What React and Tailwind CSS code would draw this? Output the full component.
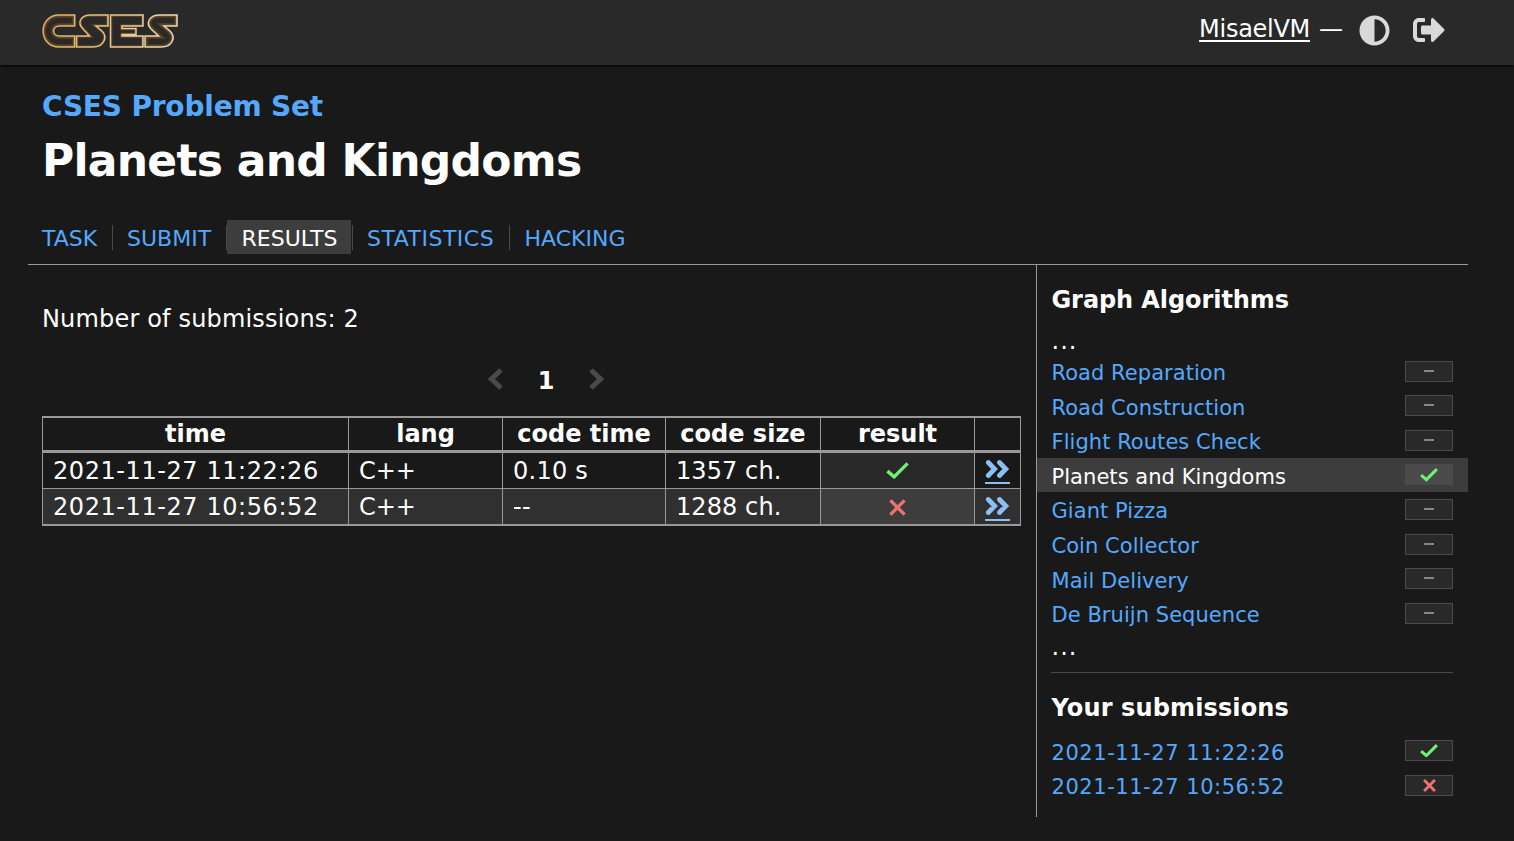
import { FaAdjust, FaSignOutAlt } from "react-icons/fa";

const LOGO_SHAPES = [
  "M74.700 15V26H60C51.500 26 51.500 36 60 36H74.700V47H59C37.800 47 37.800 15 59 15Z",
  "M108 15V26H96L102 31C108 37 104 47 93 47H76.500V36H89.500L83 29C77 23 80 15 91 15Z",
  "M110.500 15H143V26H122V28.500H136V34.500H122V36H143V47H110.500Z",
  "M177 15V26H164L170 31C176 37 173 47 161 47H145V36H158.500L151 29C145.500 23 149 15 160 15Z",
];

function Logo() {
  return (
    <svg width="140" height="40" viewBox="40 11 140 40" fill="none">
      <defs>
        <linearGradient id="gold" gradientUnits="userSpaceOnUse" x1="42" y1="0" x2="178" y2="0">
          <stop offset="0" stopColor="#d9ad66" />
          <stop offset="0.6" stopColor="#e6cb92" />
          <stop offset="1" stopColor="#ead9c4" />
        </linearGradient>
        <clipPath id="letters">
          {LOGO_SHAPES.map((d) => <path key={d} d={d} />)}
        </clipPath>
      </defs>
      <g clipPath="url(#letters)" stroke="#8a5a20">
        <path d={LOGO_SHAPES[0]} strokeWidth="6" opacity=".35" />
        <path d={LOGO_SHAPES[3]} strokeWidth="6" opacity=".35" />
        {LOGO_SHAPES.map((d) => <path key={d} d={d} strokeWidth="3.600" opacity=".55" />)}
      </g>
      {LOGO_SHAPES.map((d) => <path key={d} d={d} stroke="url(#gold)" strokeWidth="1.500" />)}
    </svg>
  );
}

const Check = ({ w }) => (
  <svg width={w} height={(w * 18) / 24} viewBox="0 0 24 18" fill="none" stroke="#71f076" strokeWidth={w > 20 ? 3.5 : 4}>
    <path d="M1.500 9.500L8.500 15.500L22.500 1.500" />
  </svg>
);
const Cross = ({ w }) => (
  <svg width={w} height={w} viewBox="0 0 18 18" fill="none" stroke="#f07171" strokeWidth={w > 15 ? 3.5 : 4}>
    <path d="M1.500 1.500L16.500 16.500M16.500 1.500L1.500 16.500" />
  </svg>
);
const Chevron = ({ flip }) => (
  <svg width="15" height="22" viewBox="0 0 15 22" fill="none" stroke="currentColor" strokeWidth="5" className={flip ? "-scale-x-100" : ""}>
    <path d="M13 2L3.500 11L13 20" />
  </svg>
);
const DoubleArrow = () => (
  <svg width="25" height="20" viewBox="0 0 25 20" fill="none" stroke="#8cc0f5" strokeWidth="4.8" strokeLinecap="round">
    <path d="M3.300 3.500L9.600 10L3.300 16.500M14.500 3.500L20.800 10L14.500 16.500" />
  </svg>
);

function Badge({ state, active }) {
  return (
    <span className={"flex h-[21px] w-12 items-center justify-center border border-[#4a4a4a] " + (active ? "bg-[#4a4a4a]" : "bg-[#292929]")}>
      {state === "ok" ? <Check w={18} /> : state === "bad" ? <Cross w={13} /> : <span className="mb-px h-[2px] w-[10px] bg-[#858585]" />}
    </span>
  );
}

function Item({ label, state, active, date }) {
  return (
    <li className={"flex h-[34.560px] items-center justify-between pl-[14.500px] pr-[15px] " + (active ? "bg-[#3d3d3d] text-white" : "text-[#54a9ff]")}>
      <a className={"pt-[4px] text-[21px] leading-[30px] " + (date ? "tracking-[0.550px]" : "tracking-[0.050px]")}>{label}</a>
      <Badge state={state} active={active} />
    </li>
  );
}

const cols = "grid grid-cols-[306px_154px_163px_155px_154px_46px]";
const cell = "h-full border-l border-[#999]";
const spacing = ["tracking-[0.570px]", "", "tracking-[0.250px]", "tracking-[0.080px]"];

function Row({ cells, ok, alt }) {
  return (
    <div className={cols + " h-[35px] grid-rows-[35px] text-2xl leading-[37px] " + (alt ? "bg-[#303030]" : "")}>
      {cells.map((c, i) => (
        <div key={i} className={cell + " pl-[10px] " + spacing[i]}>{c}</div>
      ))}
      <div className={cell + " flex items-center justify-center " + (alt ? "bg-[#3d3d3d] pt-px" : "bg-[#292929]")}>
        {ok ? <Check w={23} /> : <Cross w={17} />}
      </div>
      <div className={cell + " flex justify-center " + (alt ? "pt-[7px]" : "pt-[6px]")}>
        <a className="h-[25px] w-[25px] border-b-2 border-[#8cc0f5]"><DoubleArrow /></a>
      </div>
    </div>
  );
}

const Divider = () => <i className="mt-[5px] h-[25px] w-px bg-[#4a4a4a]" />;

export default function App() {
  return (
    <div className="flex h-[841px] flex-col overflow-hidden bg-[#191919] font-['DejaVu_Sans',sans-serif] text-white">
      <header className="flex h-[65px] shrink-0 items-start justify-between bg-[#292929] pl-10 pr-[69px] shadow-[0_1px_3px_#000]">
        <div className="pt-[11px]"><Logo /></div>
        <div className="flex items-center pt-[9px] text-2xl leading-[36px]">
          <a className="mt-[2px] tracking-[-0.280px] underline decoration-2 underline-offset-[3px]">MisaelVM</a>
          <span className="ml-[9px] mt-[2px] w-[24px]">—</span>
          <FaAdjust size={31} className="ml-[16px] mt-[4px] text-[#d9d9d9]" />
          <FaSignOutAlt size={32} className="ml-[23px] mt-[4px] text-[#d9d9d9]" />
        </div>
      </header>
      <div className="pl-[42px] pt-[25px]">
        <h4 className="text-[28px] font-bold leading-[34px] tracking-[-0.180px] text-[#54a9ff]">CSES Problem Set</h4>
        <h1 className="mt-[10px] text-[44px] font-bold leading-[54px] tracking-[-0.750px]">Planets and Kingdoms</h1>
      </div>
      <nav className="ml-[28px] mt-[32px] flex h-[45px] w-[1440px] shrink-0 border-b border-[#999] text-[22px] leading-[37px] text-[#54a9ff]">
        <div className="w-[84px] pl-[14px]">TASK</div>
        <Divider />
        <div className="w-[113px] pl-[14px]">SUBMIT</div>
        <Divider />
        <div className="h-[34px] w-[124px] bg-[#3d3d3d] pl-[14.500px] text-white">RESULTS</div>
        <i className="ml-px mt-[5px] h-[25px] w-px bg-[#4a4a4a]" />
        <div className="w-[156px] pl-[14px] tracking-[0.500px]">STATISTICS</div>
        <Divider />
        <div className="pl-[14.500px]">HACKING</div>
      </nav>
      <div className="flex">
        <main className="ml-[42px] w-[979px]">
          <p className="mt-[36px] text-2xl leading-[36px] tracking-[0.170px]">Number of submissions: 2</p>
          <div className="mt-[24px] flex h-[36px] items-center justify-center pl-[29px] text-[#4a4a4a]">
            <Chevron />
            <b className="mx-[34.500px] pt-[3px] text-2xl text-white">1</b>
            <Chevron flip />
          </div>
          <div className="mt-[19px] border-y-2 border-r border-[#999]">
            <div className={cols + " h-8 text-center text-2xl font-bold leading-8"}>
              {["time", "lang", "code time", "code size", "result", ""].map((h) => <div key={h} className={cell}>{h}</div>)}
            </div>
            <div className="h-[3px] bg-[#999]" />
            <Row cells={["2021-11-27 11:22:26", "C++", "0.10 s", "1357 ch."]} ok />
            <div className="h-px bg-[#999]" />
            <Row cells={["2021-11-27 10:56:52", "C++", "--", "1288 ch."]} alt />
          </div>
        </main>
        <aside className="ml-[15px] h-[552px] w-[432px] border-l border-[#999]">
          <h4 className="ml-[14.500px] mt-[19px] text-2xl font-bold leading-8 tracking-[-0.080px]">Graph Algorithms</h4>
          <p className="ml-[14.500px] mt-[10px] h-[29px] text-[24px] leading-[30px] tracking-[1px]">...</p>
          <ul className="-mt-px">
            <Item label="Road Reparation" />
            <Item label="Road Construction" />
            <Item label="Flight Routes Check" />
            <Item label="Planets and Kingdoms" state="ok" active />
            <Item label="Giant Pizza" />
            <Item label="Coin Collector" />
            <Item label="Mail Delivery" />
            <Item label="De Bruijn Sequence" />
          </ul>
          <p className="ml-[14.500px] mt-[2px] h-[30px] text-[24px] leading-[30px] tracking-[1px]">...</p>
          <div className="ml-[14px] mr-[15px] mt-[10px] h-px bg-[#4a4a4a]" />
          <h4 className="ml-[14.500px] mt-[19px] text-2xl font-bold leading-8 tracking-[0.130px]">Your submissions</h4>
          <ul className="mt-[9px]">
            <Item label="2021-11-27 11:22:26" state="ok" date />
            <Item label="2021-11-27 10:56:52" state="bad" date />
          </ul>
        </aside>
      </div>
    </div>
  );
}
